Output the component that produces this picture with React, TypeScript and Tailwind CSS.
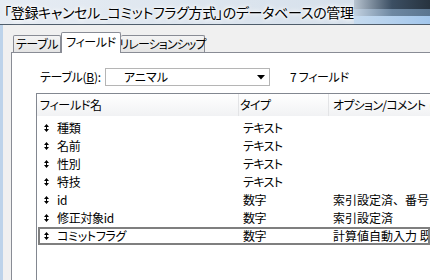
import React from 'react';

const rows = [
  { name: '種類', type: 'テキスト', opt: '' },
  { name: '名前', type: 'テキスト', opt: '' },
  { name: '性別', type: 'テキスト', opt: '' },
  { name: '特技', type: 'テキスト', opt: '' },
  { name: 'id', type: '数字', opt: '索引設定済、番号自動入力' },
  { name: '修正対象id', type: '数字', opt: '索引設定済' },
  { name: 'コミットフラグ', type: '数字', opt: '計算値自動入力 既存値を置き換えない' },
];

const MoveIcon = () => (
  <svg width="5" height="8" viewBox="0 0 5 8" className="shrink-0">
    <path d="M2.5 0L5 3H0Z M0 5H5L2.5 8Z" fill="#000" />
    <rect x="2" y="3" width="1" height="2" fill="#000" />
  </svg>
);

export default function App() {
  return (
    <div className="w-[430px] h-[280px] overflow-hidden flex flex-col bg-[#f0f0f0] text-[12px] text-black font-['Noto_Sans_CJK_JP','Noto_Sans',sans-serif] [font-feature-settings:'palt']">
      {/* title bar */}
      <div className="h-[25px] shrink-0 flex border-b border-[#4f5d6b] bg-linear-to-r from-[#e6ecf3] to-[#d3deea]">
        <div className="shrink-0 pl-[4px] pt-[3px] text-[14px] leading-[18px] tracking-[-0.3px] whitespace-nowrap [text-shadow:0_0_6px_#fff,0_0_4px_#fff,0_0_2px_#fff]">
          「登録キャンセル_コミットフラグ方式」のデータベースの管理
        </div>
        {/* aero glass on the right of the caption */}
        <div className="flex-1 flex flex-col">
          <div className="h-[9px] bg-linear-to-r from-[#b9c5d1] via-[#3c4f63] to-[#27333f]" />
          <div className="h-[7px] bg-linear-to-r from-[#c3d2e1] via-[#6e88a2] to-[#5a7590]" />
          <div className="flex-1 bg-linear-to-r from-[#c6dbef] to-[#a2c6ec]" />
        </div>
      </div>

      <div className="flex flex-1 min-h-0">
        <div className="w-[3px] bg-[#bdd3ea]" />
        <div className="flex-1 flex flex-col pl-[8px] pt-[7px] min-w-0">
          {/* tabs */}
          <div className="flex items-end h-[20px] pl-[2px] shrink-0 whitespace-nowrap">
            <div className="w-[48px] h-[17px] flex items-center justify-center border-t border-l border-r border-[#898c95] rounded-t-[2px] bg-linear-to-b from-[#f4f4f4] to-[#e4e4e4] tracking-[-0.4px]">
              テーブル
            </div>
            <div className="relative z-10 -mb-px w-[60px] h-[21px] flex items-center justify-center pb-[2px] border-t border-l border-r border-[#898c95] rounded-t-[2px] bg-white tracking-[-0.4px]">
              フィールド
            </div>
            <div className="w-[84px] h-[17px] flex items-center justify-center border-t border-r border-[#898c95] rounded-t-[2px] bg-linear-to-b from-[#f4f4f4] to-[#e4e4e4] tracking-[-0.9px]">
              リレーションシップ
            </div>
          </div>

          {/* panel */}
          <div className="flex-1 flex flex-col border-l border-t border-[#898c95] bg-white pt-[15px] pl-[24px] min-h-0">
            <div className="flex items-center h-[18px] shrink-0">
              <div className="w-[69px] pl-[4px] whitespace-nowrap tracking-[-0.3px]">
                テーブル(<span className="underline">B</span>):
              </div>
              <div className="w-[165px] h-[18px] flex items-center justify-between pl-[18px] pr-[4px] border border-[#b5b5b5] bg-white">
                <span>アニマル</span>
                <svg width="8" height="5" viewBox="0 0 8 5">
                  <path d="M0 0H8L4 4.5Z" fill="#000" />
                </svg>
              </div>
              <div className="ml-[20px] whitespace-nowrap tracking-[-0.3px]">7 フィールド</div>
            </div>

            {/* list */}
            <div className="mt-[7px] flex-1 border-l border-t border-[#828790] bg-white min-h-0 overflow-hidden">
              <div className="flex h-[22px] items-center bg-linear-to-b from-white to-[#f1f2f4] whitespace-nowrap">
                <div className="w-[202px] h-full flex items-center pl-[3px] border-r border-[#e3e4e6] shrink-0 tracking-[-0.3px]">フィールド名</div>
                <div className="w-[90px] h-full flex items-center pl-[1px] border-r border-[#e3e4e6] shrink-0 tracking-[-0.5px]">タイプ</div>
                <div className="h-full flex items-center pl-[4px] tracking-[-0.7px]">オプション/コメント&nbsp;&nbsp;(クリックして切り替え)</div>
              </div>
              <div className="pt-[3px]">
                {rows.map((r, i) => {
                  const selected = i === rows.length - 1;
                  return (
                    <div
                      key={r.name}
                      className={
                        selected
                          ? 'flex h-[18px] items-center whitespace-nowrap ml-px outline-2 outline-[#7f7f7f] -outline-offset-2'
                          : 'flex h-[18px] items-center whitespace-nowrap'
                      }
                    >
                      <div className={selected ? 'w-[201px] pl-[6px] flex items-center shrink-0' : 'w-[202px] pl-[7px] flex items-center shrink-0'}>
                        <MoveIcon />
                        <span className="ml-[8px] tracking-[-0.3px]">{r.name}</span>
                      </div>
                      <div className="w-[90px] pl-[4px] shrink-0 tracking-[-0.6px]">{r.type}</div>
                      <div className="pl-[4px] [font-feature-settings:normal]">{r.opt}</div>
                    </div>
                  );
                })}
              </div>
            </div>
          </div>
        </div>
      </div>
    </div>
  );
}
